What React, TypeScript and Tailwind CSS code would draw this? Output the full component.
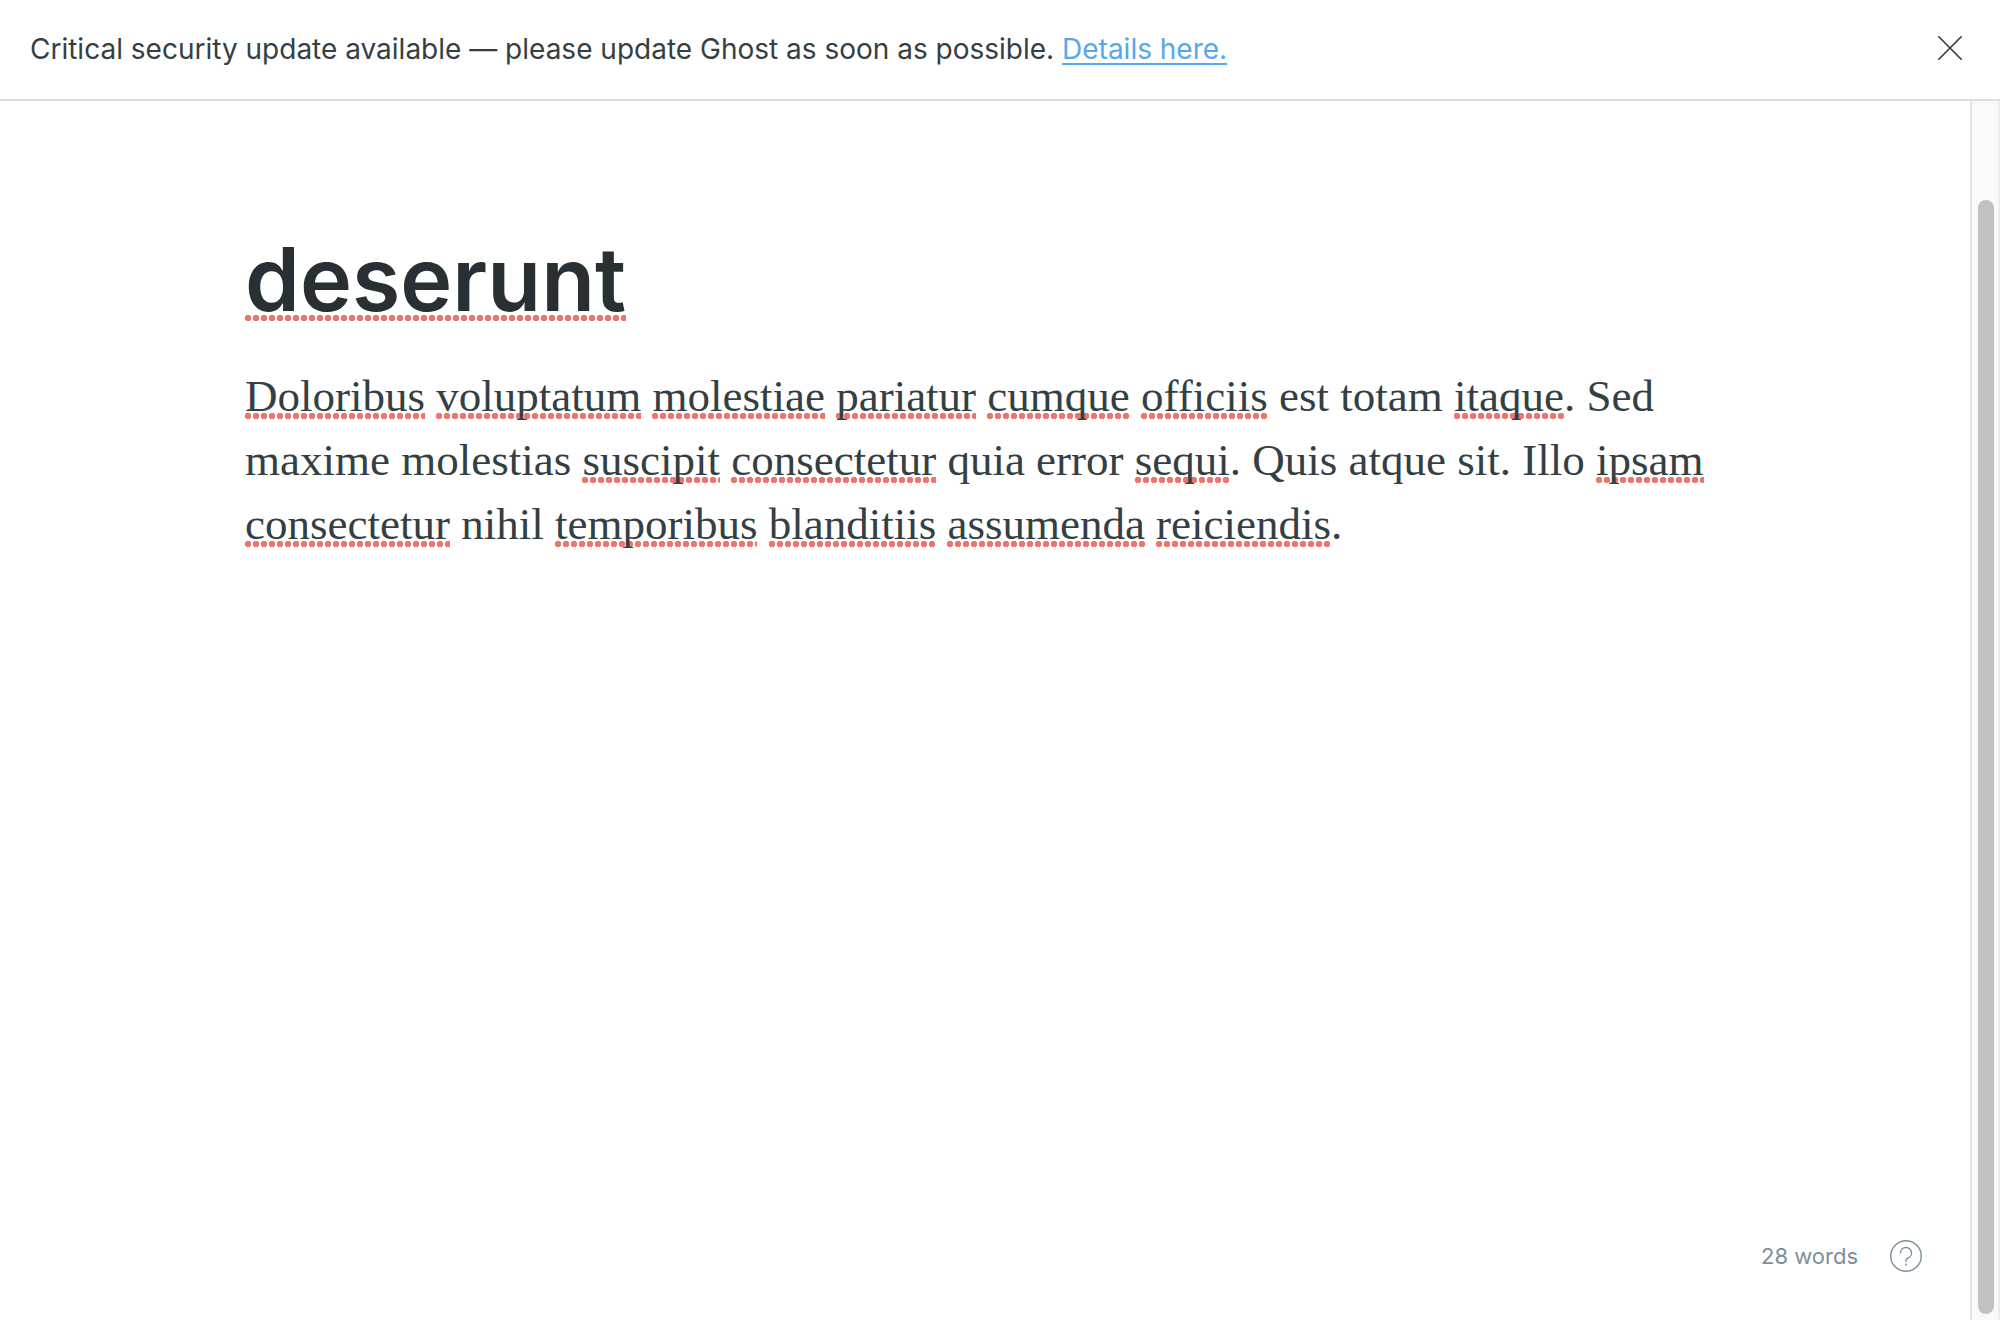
import { Fragment } from "react";

const body =
  "*Doloribus* *voluptatum* *molestiae* *pariatur* *cumque* *officiis* est totam *itaque*. Sed maxime molestias *suscipit* *consectetur* quia error *sequi*. Quis atque sit. Illo *ipsam* *consectetur* nihil *temporibus* *blanditiis* *assumenda* *reiciendis*.";

// Words wrapped in asterisks carry the spell-check underline.
function SpelledText({ text }: { text: string }) {
  return text.split(" ").map((token, i) => {
    const match = token.match(/^\*(.+)\*(.*)$/);
    return (
      <Fragment key={i}>
        {i > 0 && " "}
        {match ? (
          <>
            <span className="bg-[radial-gradient(circle_at_3px_3px,#f1746b_2.9px,transparent_3.5px)] bg-[length:8px_6px] bg-[position:left_bottom_2px] bg-repeat-x">
              {match[1]}
            </span>
            {match[2] && <span>{match[2]}</span>}
          </>
        ) : (
          <span>{token}</span>
        )}
      </Fragment>
    );
  });
}

function Banner() {
  return (
    <aside className="flex items-start justify-between border-b-2 border-[#dddddd] px-[30px] py-7 text-[#343f44]">
      <p className="text-[28px] leading-[43px]">
        Critical security update available — please update Ghost as soon as possible.{" "}
        <a href="#details" className="text-[#55a8ee] underline decoration-2 underline-offset-4">
          Details here.
        </a>
      </p>
      <button type="button" aria-label="Close" className="p-2">
        <svg width="24" height="24" viewBox="0 0 24 24" fill="none" stroke="#30393d" strokeWidth="1.6" strokeLinecap="round">
          <path d="M.8.8l22.4 22.4M23.2.8L.8 23.2" />
        </svg>
      </button>
    </aside>
  );
}

function Scrollbar() {
  return (
    <div
      aria-hidden="true"
      className="flex w-[30px] shrink-0 flex-col items-end border-x-2 border-l-[#e4e4e4] border-r-[#ececec] bg-[#f9f9f9] pt-[99px] pr-1 pb-[6px]"
    >
      <div className="w-4 flex-1 rounded-full bg-[#c1c1c1]" />
    </div>
  );
}

export default function App() {
  return (
    <div className="flex min-h-screen flex-col bg-white font-['Inter',sans-serif]">
      <Banner />
      <div className="flex flex-1">
        <div className="flex flex-1 flex-col">
          <main className="mx-auto w-full max-w-[1480px] flex-1 pt-[122px]">
            <h1
              contentEditable
              suppressContentEditableWarning
              spellCheck={false}
              aria-label="Post title"
              className="text-[88px] leading-[112px] font-semibold text-[#283034] outline-none"
            >
              <span className="bg-[radial-gradient(circle_at_3px_3px,#f1746b_2.9px,transparent_3.5px)] bg-[length:8px_6px] bg-[position:left_bottom_11px] bg-repeat-x">
                deserunt
              </span>
            </h1>
            <div
              contentEditable
              suppressContentEditableWarning
              spellCheck={false}
              role="textbox"
              aria-multiline="true"
              aria-label="Post content"
              className="mt-[29px] font-['Liberation_Serif',serif] text-[45px] leading-[64px] text-[#343f44] outline-none"
            >
              <p>
                <SpelledText text={body} />
              </p>
            </div>
          </main>
          <footer className="flex items-center justify-end gap-8 px-12 pb-12 text-[22px] leading-8 text-[#7c8f9b]">
            <span>28 words</span>
            <button type="button" aria-label="Help">
              <svg width="32" height="32" viewBox="0 0 32 32" fill="none" stroke="currentColor" strokeWidth="1.4" strokeLinecap="round" strokeLinejoin="round">
                <circle cx="16" cy="16" r="15.3" />
                <path d="M10.5 13a5.5 5.5 0 1 1 7.7 5c-1.5.6-2.2 1.3-2.2 2.6v.7" />
                <circle cx="16" cy="24.5" r="1" fill="currentColor" stroke="none" />
              </svg>
            </button>
          </footer>
        </div>
        <Scrollbar />
      </div>
    </div>
  );
}
